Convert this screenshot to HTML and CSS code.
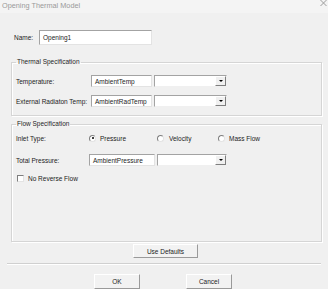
FILE: index.html
```html
<!DOCTYPE html>
<html lang="en">
<head>
    <meta charset="UTF-8">
    <meta name="viewport" content="width=device-width, initial-scale=1.0">
    <title>Opening Thermal Model</title>
    <link rel="stylesheet" href="styles.css">
</head>
<body>
    <div class="dialog">
        <div class="titlebar">
            <span class="title">Opening Thermal Model</span>
            <svg class="close" width="7" height="6" viewBox="0 0 7 6">
                <path d="M0.5 0 L6.5 6 M6.5 0 L0.5 6" stroke="#9c9c9c" stroke-width="1" fill="none"/>
            </svg>
        </div>

        <div class="name-row">
            <span class="label name-label">Name:</span>
            <span class="field name-field">Opening1</span>
        </div>

        <!-- Thermal group -->
        <fieldset class="group thermal">
            <legend>Thermal Specification</legend>
            <div class="row">
                <span class="label">Temperature:</span>
                <span class="field">AmbientTemp</span>
                <span class="combo"><span class="combo-btn"></span></span>
            </div>
            <div class="row">
                <span class="label">External Radiaton Temp:</span>
                <span class="field">AmbientRadTemp</span>
                <span class="combo"><span class="combo-btn"></span></span>
            </div>
        </fieldset>

        <!-- Flow group -->
        <fieldset class="group flow">
            <legend>Flow Specification</legend>
            <div class="row inlet-row">
                <span class="label flow-label">Inlet Type:</span>
                <span class="option opt-pressure"><span class="radio checked"></span>Pressure</span>
                <span class="option opt-velocity"><span class="radio"></span>Velocity</span>
                <span class="option"><span class="radio"></span>Mass Flow</span>
            </div>
            <div class="row pressure-row">
                <span class="label flow-label">Total Pressure:</span>
                <span class="field pressure-field">AmbientPressure</span>
                <span class="combo pressure-combo"><span class="combo-btn"></span></span>
            </div>
            <div class="check-row">
                <span class="checkbox"></span>No Reverse Flow
            </div>
        </fieldset>

        <div class="defaults-row">
            <span class="button defaults">Use Defaults</span>
        </div>

        <div class="separator"></div>

        <div class="actions">
            <span class="button">OK</span>
            <span class="button">Cancel</span>
        </div>
    </div>
</body>
</html>
```

FILE: styles.css
```css
/* General Styles */
body {
    margin: 0;
    background: #f0f0f0;
    font-family: 'Liberation Sans', Arial, sans-serif;
    font-size: 6.5px;
    color: #1c1c1c;
}

.dialog {
    width: 328px;
    height: 289px;
    overflow: hidden;
}

/* Title bar */
.titlebar {
    height: 13px;
    background: #f4f4f4;
    display: flex;
    justify-content: space-between;
    align-items: flex-start;
    padding-left: 2px;
}

.title {
    font-size: 7.3px;
    line-height: 12px;
    color: #9a9a9a;
}

.close {
    margin-right: 1px;
}

/* Labels */
.label {
    width: 75px;
    flex-shrink: 0;
    white-space: nowrap;
}

.flow-label {
    width: 73px;
}

/* Name */
.name-row {
    display: flex;
    align-items: center;
    margin-top: 17px;
    padding-left: 14px;
    height: 15px;
}

.name-row .name-label {
    width: 25px;
}

.field {
    display: flex;
    align-items: center;
    flex: none;
    box-sizing: border-box;
    background: #fff;
    border: 1px solid;
    border-color: #a3a3a3 #e3e3e3 #e3e3e3 #a3a3a3;
    padding-left: 3px;
    height: 12px;
    width: 61px;
    white-space: nowrap;
    overflow: hidden;
}

.name-field {
    width: 113px;
    height: 15px;
}

/* Group boxes */
.group {
    margin: 13px 6px 0 11px;
    padding: 9px 4px 8px 4px;
    border: 1px solid #d5d5d5;
    box-shadow: 1px 1px 0 #fff, inset 1px 1px 0 #fff;
}

.group legend {
    padding: 0 1px;
    line-height: 8px;
}

.flow {
    margin-top: 4px;
    padding-top: 4px;
    padding-bottom: 59px;
}

.row {
    display: flex;
    align-items: center;
    height: 12px;
    margin-bottom: 8px;
}

.row:last-child {
    margin-bottom: 0;
}

/* Combo boxes */
.combo {
    display: flex;
    justify-content: flex-end;
    flex: none;
    box-sizing: border-box;
    width: 73px;
    height: 12px;
    margin-left: 2px;
    background: #fff;
    border: 1px solid;
    border-color: #a3a3a3 #f0f0f0 #f0f0f0 #a3a3a3;
}

.combo-btn {
    box-sizing: border-box;
    width: 11px;
    display: flex;
    align-items: center;
    justify-content: center;
    background: #f0f0f0;
    border: 1px solid;
    border-color: #fff #7e7e7e #7e7e7e #fff;
}

.combo-btn::after {
    content: "";
    border-left: 2px solid transparent;
    border-right: 2px solid transparent;
    border-top: 2px solid #000;
}

/* Flow rows */
.inlet-row {
    margin-bottom: 10px;
}

.option {
    display: flex;
    align-items: center;
    gap: 4px;
    width: 61px;
    white-space: nowrap;
}

.opt-pressure {
    width: 68px;
}

.opt-velocity {
    gap: 5px;
}

.radio {
    box-sizing: border-box;
    width: 7px;
    height: 7px;
    border-radius: 50%;
    border: 1px solid;
    border-color: #7e7e7e #e3e3e3 #e3e3e3 #7e7e7e;
    background: #fff;
    display: flex;
    align-items: center;
    justify-content: center;
}

.radio.checked::after {
    content: "";
    width: 2px;
    height: 2px;
    border-radius: 50%;
    background: #000;
}

.pressure-field {
    width: 66px;
}

.pressure-combo {
    width: 70px;
}

.check-row {
    display: flex;
    align-items: center;
    gap: 4px;
    margin-top: 7px;
    height: 8px;
    padding-left: 1px;
}

.checkbox {
    box-sizing: border-box;
    width: 7px;
    height: 7px;
    background: #fff;
    border: 1px solid;
    border-color: #7e7e7e #e3e3e3 #e3e3e3 #7e7e7e;
}

/* Buttons */
.defaults-row {
    display: flex;
    justify-content: center;
    margin-top: 2px;
    padding-left: 3px;
}

.button {
    display: flex;
    align-items: center;
    justify-content: center;
    box-sizing: border-box;
    width: 46px;
    height: 15px;
    background: #f2f2f2;
    border: 1px solid;
    border-color: #fff #9a9a9a #9a9a9a #fff;
}

.defaults {
    width: 65px;
    height: 14px;
}

.separator {
    margin: 5px 7px 0 7px;
    height: 1px;
    background: #d0d0d0;
    border-bottom: 1px solid #fff;
}

.actions {
    display: flex;
    gap: 46px;
    justify-content: center;
    margin-top: 9px;
    padding-right: 2px;
}
```
